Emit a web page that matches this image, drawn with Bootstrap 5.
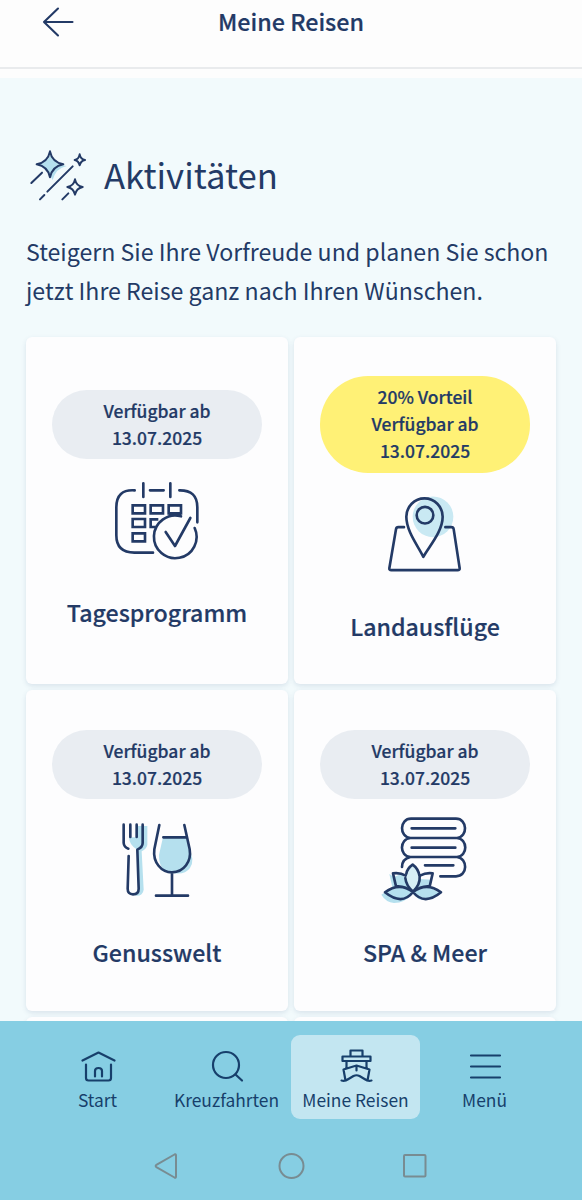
<!DOCTYPE html>
<html lang="de">
<head>
<meta charset="utf-8">
<meta name="viewport" content="width=device-width, initial-scale=1">
<title>Meine Reisen</title>
<link href="https://cdn.jsdelivr.net/npm/bootstrap@5.3.0/dist/css/bootstrap.min.css" rel="stylesheet">
<style>
  :root { --navy: #233a66; --sky: #86cee3; --tint: #b5e0ee; }
  body { font-family: "Noto Sans CJK SC", "Noto Sans", sans-serif; color: var(--navy); background: #f2fafc; height: 1200px; overflow: hidden; }
  svg { display: block; fill: none; stroke: var(--navy); stroke-linecap: round; stroke-linejoin: round; }
  .tint { fill: var(--tint); stroke: none; }
  .topbar { height: 78px; background: #fdfdfd; }
  .topbar-row { height: 69px; border-bottom: 2px solid #e9ebed; padding: 0 42px 23px; display: grid; grid-template-columns: 32px 1fr 32px; }
  .topbar h1 { font-size: 23.3px; font-weight: 500; line-height: 40px; padding-bottom: 3px; -webkit-text-stroke: .2px; }
  .page { padding: 67px 26px 0; min-height: 0; }
  .page h2 { font-size: 34.7px; font-weight: 400; line-height: 58px; padding-bottom: 2px; margin-left: 16px; }
  .intro { font-size: 23.15px; line-height: 39px; margin: 27px 0; white-space: nowrap; }
  .tiles { display: grid; grid-template-columns: 262px 262px; grid-template-rows: 347px 321px 321px; gap: 6px; }
  .tile { background: #fdfdfe; border: 0; border-radius: 6px; box-shadow: 0 2px 5px rgba(45, 75, 120, .13); }
  .pill { width: 210px; border-radius: 48px; background: #e9edf2; font-size: 17.5px; font-weight: 500; line-height: 27px; padding: 7px 20px 8.5px; -webkit-text-stroke: .2px; }
  .pill-deal { background: #fff176; }
  .tile svg { width: 100px; height: 100px; margin: 13px 0 22px; stroke-width: 7.9; }
  .tile h3 { font-size: 23.2px; font-weight: 500; line-height: 36px; padding-bottom: 1px; -webkit-text-stroke: .2px; }
  .dock { height: 179px; background: var(--sky); padding: 14px 33px 0; position: relative; z-index: 2; }
  .dock a { width: 129px; height: 84px; padding-top: 11px; border-radius: 9px; color: #173f6b; font-size: 17.4px; line-height: 28px; white-space: nowrap; }
  .dock a svg { width: 40px; height: 40px; stroke: #173f6b; stroke-width: 2.2; }
  .dock .current { background: #c3e6f1; }
  .system { height: 30px; margin-top: 32px; padding: 0 119px 0 118px; }
  .system svg { width: 30px; height: 30px; stroke: #788c92; stroke-width: 2; }
</style>
</head>
<body class="d-flex flex-column">
<header class="topbar flex-shrink-0">
  <div class="topbar-row align-items-center">
    <svg width="32" height="32" viewBox="0 0 32 32" stroke-width="2.1"><path d="M30.500 16H2M16 2.500 2 16l14 13.500"/></svg>
    <h1 class="m-0 text-center">Meine Reisen</h1>
  </div>
</header>

<main class="page flex-grow-1 overflow-hidden">
  <div class="d-flex align-items-center">
    <svg width="62" height="60" viewBox="18 15 186 180" stroke-width="6">
      <path class="tint" d="M92 44Q104 75 140 78Q108 84 98 120L90 106Q78 82 55 73Q82 66 92 44Z"/>
      <path d="M90 34Q96 66 130 73Q96 80 90 112Q84 80 50 73Q84 66 90 34Z"/>
      <path d="M179 43Q182 58 195 60Q182 63 179 76Q176 63 164 60Q176 58 179 43Z"/>
      <path d="M165 118Q169 138 188 141Q169 145 165 164Q161 145 142 141Q161 138 165 118Z"/>
      <path d="M34 129 66 98M82 155 158 79M60 178l13-13M127 178l18-18"/>
    </svg>
    <h2 class="mb-0">Aktivitäten</h2>
  </div>
  <p class="intro">Steigern Sie Ihre Vorfreude und planen Sie schon<br>jetzt Ihre Reise ganz nach Ihren Wünschen.</p>

  <div class="tiles">
    <section class="card tile align-items-center justify-content-center text-center">
      <div class="pill">Verfügbar ab<br>13.07.2025</div>
      <svg viewBox="21 6 300 300">
        <path d="M104 61Q49 57 49 112V196Q49 248 103 248H159M238 61Q292 60 292 112V157M150 61H191M130 40V81M211 40V81"/>
        <g stroke-linejoin="miter" stroke-linecap="butt"><path d="M98 106h37v24H98zM152 106h37v24h-37zM206 106h37v24h-37zM98 147h37v24H98zM98 190h37v24H98zM175 148H152v23h14M206 134h37"/></g>
        <path d="M243 139A64 64 0 1 0 284 174M197 186 225 228 271 144"/>
      </svg>
      <h3 class="m-0">Tagesprogramm</h3>
    </section>
    <section class="card tile align-items-center justify-content-center text-center">
      <div class="pill pill-deal">20% Vorteil<br>Verfügbar ab<br>13.07.2025</div>
      <svg viewBox="0 1.500 300 300">
        <circle cx="174" cy="94" r="61" fill="#c9e9f3" stroke="none"/>
        <path d="M145 214C129 181 94 137 94 94A54 55 0 0 1 203 94C203 137 164 181 145 214Z"/>
        <circle cx="150" cy="89" r="25"/>
        <path d="M87 125H70Q64 125 63 131L43 248Q42 254 49 254H248Q255 254 254 248L236 131Q235 125 229 125H211"/>
      </svg>
      <h3 class="m-0">Landausflüge</h3>
    </section>
    <section class="card tile align-items-center justify-content-center text-center">
      <div class="pill">Verfügbar ab<br>13.07.2025</div>
      <svg viewBox="-9 6 300 300">
        <path class="tint" d="M57 82H81V48H112V105Q110 116 95 124L101 239Q98 260 75 257Q88 251 86 238L82 119Q58 107 57 82ZM159 82H229L236 116Q256 148 240 174Q224 196 188 189Q146 186 147 134Z"/>
        <path d="M41 44V99Q42 112 55 116M98 44V99Q98 112 82 119L86 236Q86 253 69 253Q53 253 53 236L56 138M61 44V81M80 44V81"/>
        <path d="M148 45 133 118C128 157 154 187 186 187C222 187 245 154 239 118L223 45M160 82H229M186 188V257M138 257H234"/>
      </svg>
      <h3 class="m-0">Genusswelt</h3>
    </section>
    <section class="card tile align-items-center justify-content-center text-center">
      <div class="pill">Verfügbar ab<br>13.07.2025</div>
      <svg viewBox="15 21 300 300">
        <path class="tint" d="M34 269Q53 256 67 246L58 207L72 216L94 207Q102 211 108 226L128 178Q145 196 150 222L185 224L178 246L207 263Q183 292 147 283L128 266Q105 293 72 294Q48 292 34 269Z"/>
        <path d="M109 206Q112 190 128 179Q145 191 149 214Q151 239 129 260Q108 241 106 219" fill="#d6eef5"/>
        <path d="M129 261Q104 241 78 244L69 205Q90 202 107 212M129 261Q154 241 179 244L188 205Q168 202 150 212M129 261Q88 230 45 262Q96 303 129 261ZM129 261Q170 230 213 262Q163 303 129 261Z"/>
        <path d="M96 186Q96 162 121 156C87 153 88 102 121 99C87 96 88 41 123 41H258C293 41 294 96 261 99C294 102 294 153 261 156C294 159 294 214 258 214H211M121 99H261M121 156H261M125 70H256M125 128H256M165 181H250"/>
      </svg>
      <h3 class="m-0">SPA &amp; Meer</h3>
    </section>
    <section class="card tile"></section>
    <section class="card tile"></section>
  </div>
</main>

<footer class="dock flex-shrink-0">
  <nav class="d-flex">
    <a href="#" class="d-flex flex-column align-items-center text-decoration-none">
      <svg viewBox="0 0 40 40"><path d="M4.500 14.500 20.500 6.500l16 8M8 18.500V32q0 2.500 2.500 2.500h20q2.500 0 2.500-2.500V18.500M17 30.500v-5.500q0-3 3.500-3t3.500 3v5.500"/></svg>
      <span>Start</span>
    </a>
    <a href="#" class="d-flex flex-column align-items-center text-decoration-none">
      <svg viewBox="0 0 40 40"><circle cx="19" cy="19" r="13"/><path d="m28.500 28.500 6.500 6"/></svg>
      <span>Kreuzfahrten</span>
    </a>
    <a href="#" class="current d-flex flex-column align-items-center text-decoration-none" aria-current="page">
      <svg viewBox="0 0 40 40"><path d="M14.500 10V4.500h12V10M6.500 10.500h28V15h-28zM10.500 15v7M30.500 15v7M20.500 19.500v5M9.500 34.500 7.500 23.500l13-4 13 4-2 11M5.500 34.500q3.500 1 7-1.500l5-3q3-1.500 6 0l5 3q3.500 2.500 7 1.500"/></svg>
      <span>Meine Reisen</span>
    </a>
    <a href="#" class="d-flex flex-column align-items-center text-decoration-none">
      <svg viewBox="0 0 40 40"><path d="M6 9.500h29M6 20.500h29M6 31.500h29"/></svg>
      <span>Menü</span>
    </a>
  </nav>
  <div class="system d-flex justify-content-between">
    <svg viewBox="0 0 30 30"><path d="M5.800 13.600 23.500 3.500q1.500-.8 1.500 1v21q0 1.800-1.500 1L5.800 16.400q-2.300-1.400 0-2.800Z"/></svg>
    <svg viewBox="0 0 30 30"><circle cx="15.500" cy="15" r="12"/></svg>
    <svg viewBox="0 0 30 30"><rect x="4" y="4" width="21.500" height="21.500" rx="1"/></svg>
  </div>
</footer>
<script src="https://cdn.jsdelivr.net/npm/bootstrap@5.3.0/dist/js/bootstrap.bundle.min.js"></script>
</body>
</html>
